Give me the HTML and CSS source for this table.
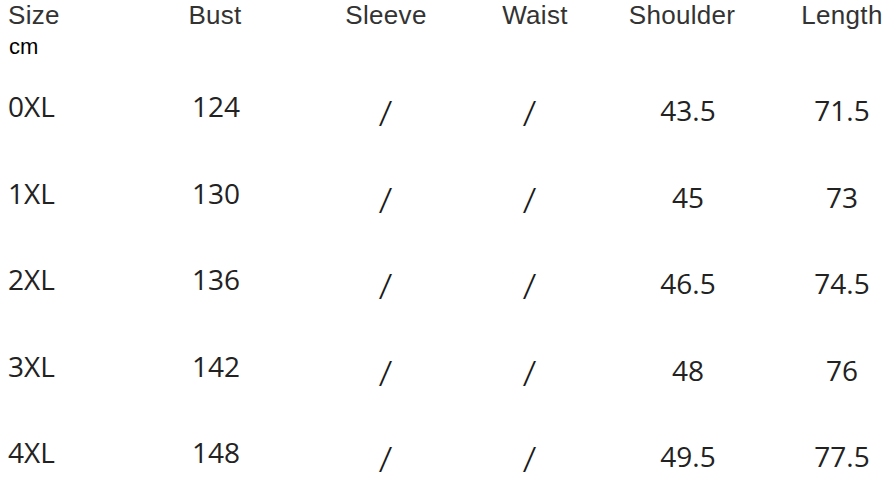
FILE: index.html
```html
<!DOCTYPE html>
<html>
<head>
<meta charset="utf-8">
<link rel="stylesheet" href="styles.css">
</head>
<body>
<div class="chart">
  <div class="row head">
    <div class="c c1">Size</div>
    <div class="c c2">Bust</div>
    <div class="c c3">Sleeve</div>
    <div class="c c4">Waist</div>
    <div class="c c5">Shoulder</div>
    <div class="c c6">Length</div>
  </div>
  <div class="unit">cm</div>
  <div class="row data">
    <div class="c c1">0XL</div><div class="c c2">124</div><div class="c c3 sl"><span class="slash">/</span></div><div class="c c4 sl"><span class="slash">/</span></div><div class="c c5 lo">43.5</div><div class="c c6 lo">71.5</div>
  </div>
  <div class="row data">
    <div class="c c1">1XL</div><div class="c c2">130</div><div class="c c3 sl"><span class="slash">/</span></div><div class="c c4 sl"><span class="slash">/</span></div><div class="c c5 lo">45</div><div class="c c6 lo">73</div>
  </div>
  <div class="row data">
    <div class="c c1">2XL</div><div class="c c2">136</div><div class="c c3 sl"><span class="slash">/</span></div><div class="c c4 sl"><span class="slash">/</span></div><div class="c c5 lo">46.5</div><div class="c c6 lo">74.5</div>
  </div>
  <div class="row data">
    <div class="c c1">3XL</div><div class="c c2">142</div><div class="c c3 sl"><span class="slash">/</span></div><div class="c c4 sl"><span class="slash">/</span></div><div class="c c5 lo">48</div><div class="c c6 lo">76</div>
  </div>
  <div class="row data">
    <div class="c c1">4XL</div><div class="c c2">148</div><div class="c c3 sl"><span class="slash">/</span></div><div class="c c4 sl"><span class="slash">/</span></div><div class="c c5 lo">49.5</div><div class="c c6 lo">77.5</div>
  </div>
</div>
</body>
</html>
```
FILE: styles.css
```css
html, body {
  margin: 0;
  padding: 0;
  background: #ffffff;
  overflow: hidden;
}
.chart {
  width: 890px;
  height: 499px;
}
.row {
  display: grid;
  grid-template-columns: 140px 150px 192px 100px 204px 104px;
}
.c {
  text-align: center;
  white-space: nowrap;
}
.c1 {
  text-align: left;
  padding-left: 8px;
}
.c6 {
  padding-left: 8px;
}
.head {
  height: 31px;
  font-family: "Liberation Sans", Arial, sans-serif;
  font-size: 26px;
  letter-spacing: 0.3px;
  line-height: 31px;
  color: #333333;
}
.head .c4 {
  padding-left: 6px;
}
.head .c5 {
  padding-right: 4px;
}
.unit {
  height: 32px;
  line-height: 32px;
  padding-left: 9px;
  font-family: "Liberation Sans", Arial, sans-serif;
  font-size: 22px;
  color: #000000;
}
.data {
  height: 86.5px;
  font-family: "Open Sans", "Noto Sans", sans-serif;
  font-size: 28px;
  line-height: 86px;
  color: #222222;
}
.data .c2 {
  padding-left: 2px;
}
.data .c4 {
  padding-right: 4px;
}
.data .c5 {
  padding-left: 8px;
}
.lo {
  padding-top: 4px;
}
.sl {
  padding-top: 3px;
  font-size: 26px;
}
.slash {
  display: inline-block;
  line-height: 1;
  vertical-align: middle;
  transform: scaleY(1.35) skewX(-12deg);
  color: #1a1a1a;
}
```
